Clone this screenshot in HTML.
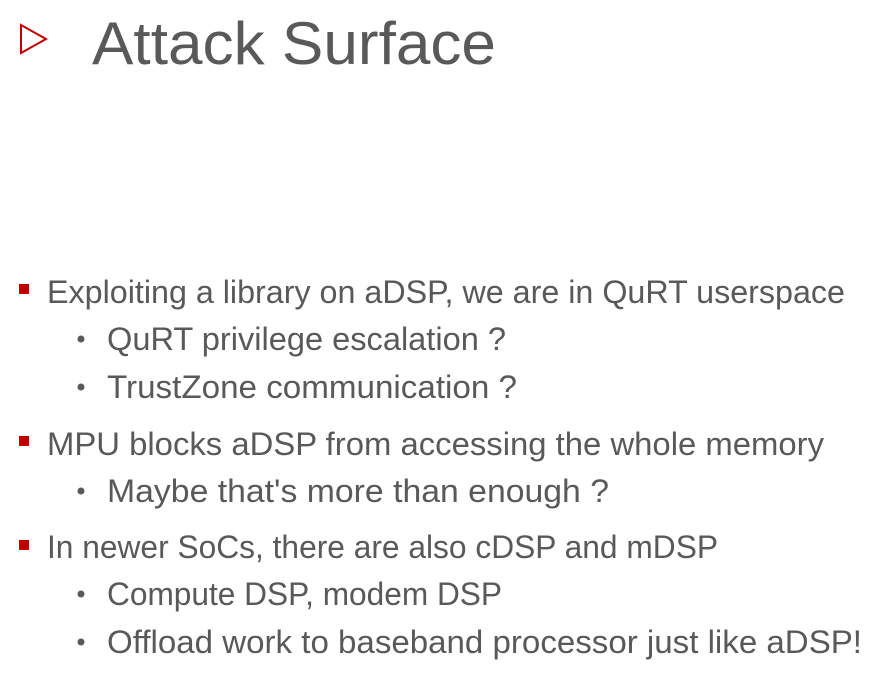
<!DOCTYPE html>
<html><head><meta charset="utf-8"><style>
html,body{margin:0;padding:0;background:#fff;width:892px;height:678px;overflow:hidden}
svg{display:block}
text{font-family:"Liberation Sans",sans-serif;fill:#595959}
</style></head><body>
<svg width="892" height="678" viewBox="0 0 892 678">
<polygon points="21,25 46,39 21,53" fill="none" stroke="#c00000" stroke-width="2"/>
<text x="92" y="64" font-size="60" textLength="404" lengthAdjust="spacingAndGlyphs">Attack Surface</text>

<rect x="19" y="284" width="10" height="10" fill="#c00000"/>
<text x="47" y="303" font-size="32" textLength="798" lengthAdjust="spacingAndGlyphs">Exploiting a library on aDSP, we are in QuRT userspace</text>
<circle cx="81" cy="339" r="3.5" fill="#595959"/>
<text x="107" y="350" font-size="32" textLength="399" lengthAdjust="spacingAndGlyphs">QuRT privilege escalation ?</text>
<circle cx="81" cy="387" r="3.5" fill="#595959"/>
<text x="107" y="398" font-size="32" textLength="410" lengthAdjust="spacingAndGlyphs">TrustZone communication ?</text>

<rect x="19" y="436" width="10" height="10" fill="#c00000"/>
<text x="47" y="455" font-size="32" textLength="777" lengthAdjust="spacingAndGlyphs">MPU blocks aDSP from accessing the whole memory</text>
<circle cx="81" cy="491" r="3.5" fill="#595959"/>
<text x="107" y="502" font-size="32" textLength="502" lengthAdjust="spacingAndGlyphs">Maybe that's more than enough ?</text>

<rect x="19" y="540" width="10" height="10" fill="#c00000"/>
<text x="47" y="558" font-size="32" textLength="671" lengthAdjust="spacingAndGlyphs">In newer SoCs, there are also cDSP and mDSP</text>
<circle cx="81" cy="594" r="3.5" fill="#595959"/>
<text x="107" y="605" font-size="32" textLength="395" lengthAdjust="spacingAndGlyphs">Compute DSP, modem DSP</text>
<circle cx="81" cy="642" r="3.5" fill="#595959"/>
<text x="107" y="653" font-size="32" textLength="755" lengthAdjust="spacingAndGlyphs">Offload work to baseband processor just like aDSP!</text>
</svg>
</body></html>
